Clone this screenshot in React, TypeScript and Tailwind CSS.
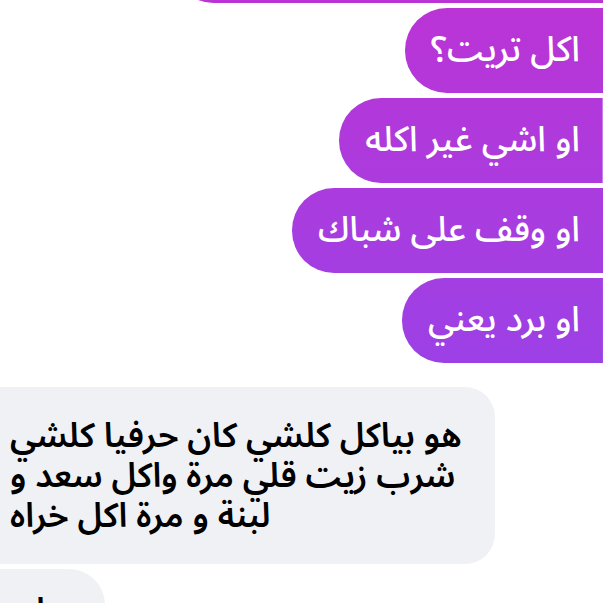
import React from "react";

const font = { fontFamily: '"Noto Sans Arabic", "Noto Naskh Arabic", "DejaVu Sans", sans-serif' };

function Out({ text }: { text: string }) {
  return (
    <div className="flex justify-end">
      <div
        dir="rtl"
        className="h-[85px] flex items-center rounded-l-[42px] bg-gradient-to-b from-[#bb33d5] to-[#8644f1] bg-fixed pl-[26px] pr-[23px] text-white text-[35px] font-medium leading-none whitespace-nowrap"
        style={font}
      >
        {text}
      </div>
    </div>
  );
}

export default function App() {
  return (
    <div className="w-[603px] h-[603px] overflow-hidden bg-white flex flex-col">
      <div className="flex justify-end -mt-[80px] pl-[172px]">
        <div className="h-[83px] w-full rounded-l-[42px] bg-gradient-to-b from-[#bb33d5] to-[#8644f1] bg-fixed" />
      </div>
      <div className="flex flex-col gap-[5px] mt-[5px]">
        <Out text="اكل تريت؟" />
        <Out text="او اشي غير اكله" />
        <Out text="او وقف على شباك" />
        <Out text="او برد يعني" />
      </div>
      <div className="flex flex-col gap-[5px] mt-[24px]">
        <div className="flex justify-start">
          <div
            dir="rtl"
            className="w-[495px] h-[177px] flex flex-col items-end justify-center rounded-r-[30px] bg-[#f0f1f5] pl-[10px] text-black text-[34px] font-semibold leading-[40px]"
            style={font}
          >
            <div>هو بياكل كلشي كان حرفيا كلشي</div>
            <div>شرب زيت قلي مرة واكل سعد و</div>
            <div>لبنة و مرة اكل خراه</div>
          </div>
        </div>
        <div className="flex justify-start">
          <div
            dir="rtl"
            className="w-[105px] h-[80px] flex items-start justify-end rounded-r-[36px] bg-[#f0f1f5] pl-[20px] pt-[22px] text-black text-[34px] font-semibold leading-[40px]"
            style={font}
          >
            <div>او</div>
          </div>
        </div>
      </div>
    </div>
  );
}
